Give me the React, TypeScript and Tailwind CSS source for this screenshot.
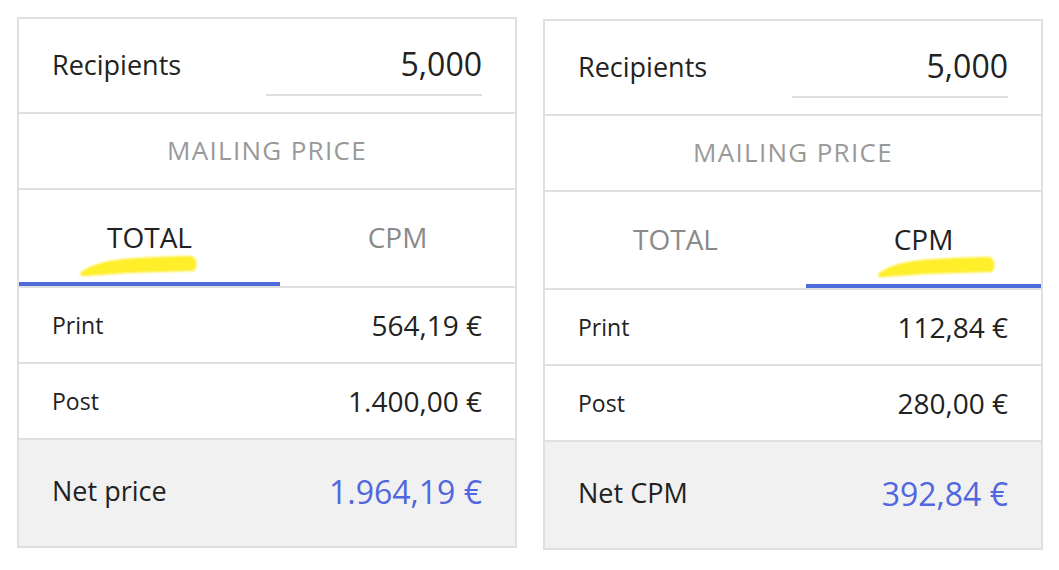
import React from "react";

type Card = {
  tab: "TOTAL" | "CPM";
  print: string;
  post: string;
  netLabel: string;
  net: string;
};

function Highlight() {
  return (
    <svg className="pointer-events-none absolute left-0 top-0" width="122" height="24" viewBox="0 0 122 24">
      <defs>
        <filter id="soft" x="-10%" y="-40%" width="120%" height="180%">
          <feGaussianBlur stdDeviation="1" />
        </filter>
      </defs>
      <path
        d="M2 19 C10 12 25 7 45 5 C70 3 95 2 114 2 C119 4 120 13 116 17 C95 18 70 18 50 19 C30 20 15 22 3 22 Z"
        fill="#ffee2b"
        filter="url(#soft)"
      />
    </svg>
  );
}

function PriceCard({ tab, print, post, netLabel, net }: Card) {
  return (
    <div className="w-[500px] border-2 border-[#e0e0e0] bg-white text-[#222]">
      <div className="flex h-[95px] items-center justify-between border-b-2 border-[#e0e0e0] px-[33px]">
        <span className="text-[27px]">Recipients</span>
        <div className="flex h-[61px] w-[216px] items-center justify-end border-b-2 border-[#e0e0e0] pb-[2px] text-[32px]">
          5,000
        </div>
      </div>
      <div className="flex h-[76px] items-center justify-center border-b-2 border-[#e0e0e0] pb-[2px] text-[26px] tracking-[1.3px] text-[#999]">
        MAILING PRICE
      </div>
      <div className="flex h-[98px] border-b-2 border-[#e0e0e0] text-[28px]">
        <div
          className={`relative flex w-[261px] items-center justify-center border-b-4 pt-[2px] ${
            tab === "TOTAL" ? "border-[#4f6cdd] text-[#222]" : "border-transparent text-[#8a8a8a]"
          }`}
        >
          TOTAL
          {tab === "TOTAL" && (
            <div className="absolute left-[59px] top-[64px]">
              <Highlight />
            </div>
          )}
        </div>
        <div
          className={`relative flex flex-1 items-center justify-center border-b-4 pt-[2px] ${
            tab === "CPM" ? "border-[#4f6cdd] text-[#222]" : "border-transparent text-[#8a8a8a]"
          }`}
        >
          CPM
          {tab === "CPM" && (
            <div className="absolute left-[70px] top-[63px]">
              <Highlight />
            </div>
          )}
        </div>
      </div>
      <div className="flex h-[76px] items-center justify-between border-b-2 border-[#e0e0e0] px-[33px]">
        <span className="text-[23px]">Print</span>
        <span className="text-[28px]">{print}</span>
      </div>
      <div className="flex h-[76px] items-center justify-between border-b-2 border-[#e0e0e0] px-[33px]">
        <span className="text-[23px]">Post</span>
        <span className="text-[28px]">{post}</span>
      </div>
      <div className="flex h-[106px] items-center justify-between bg-[#f1f1f1] px-[33px] pb-[3px]">
        <span className="text-[27px]">{netLabel}</span>
        <span className="text-[32px] text-[#5067de]">{net}</span>
      </div>
    </div>
  );
}

export default function App() {
  return (
    <div
      className="flex h-[570px] w-[1059px] items-start gap-[26px] bg-white pl-[17px] pt-[17px]"
      style={{ fontFamily: "'Open Sans', 'Noto Sans', sans-serif" }}
    >
      <PriceCard tab="TOTAL" print="564,19 €" post="1.400,00 €" netLabel="Net price" net="1.964,19 €" />
      <div className="mt-[2px]">
        <PriceCard tab="CPM" print="112,84 €" post="280,00 €" netLabel="Net CPM" net="392,84 €" />
      </div>
    </div>
  );
}
